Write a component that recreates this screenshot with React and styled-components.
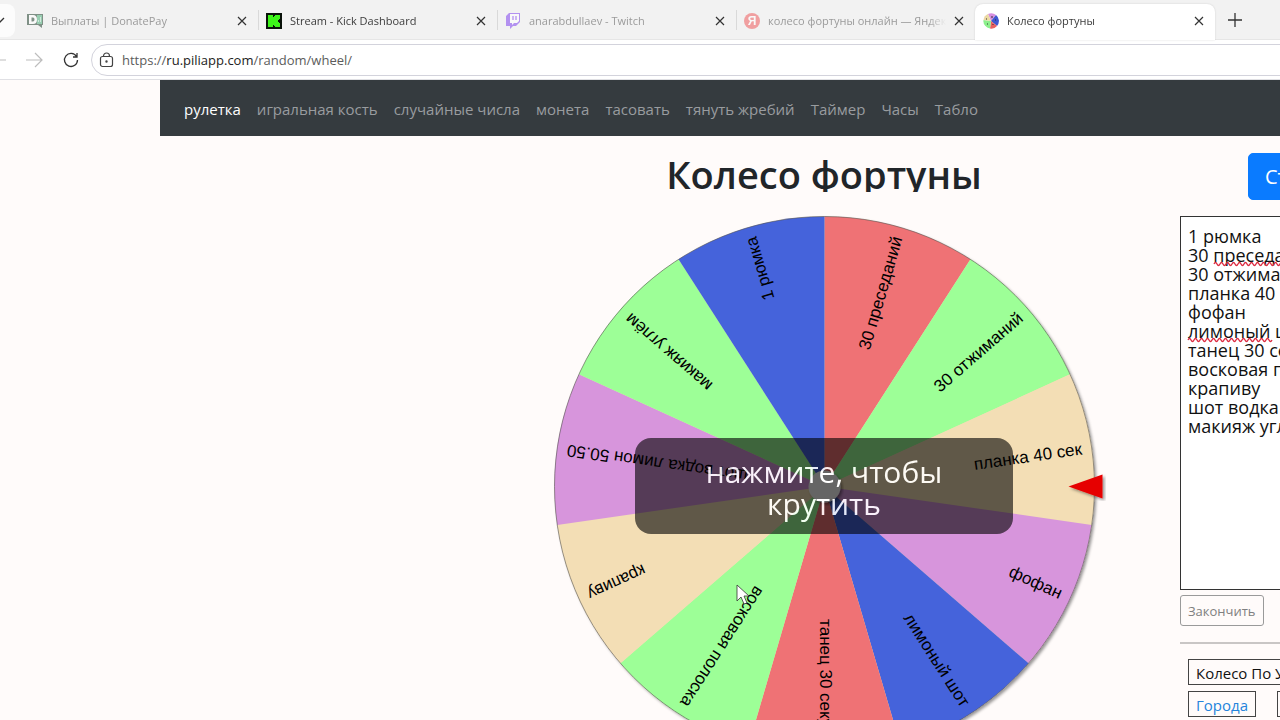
import React, { useState } from "react";
import styled, { createGlobalStyle } from 'styled-components'

const GlobalStyle = createGlobalStyle`
  * { box-sizing: border-box; }
  body {
    margin: 0;
    overflow: hidden;
    background-color: #fffbfa;
    font-family: "Open Sans", "Noto Sans", sans-serif;
    color: #212529;
  }
  button, input, textarea { font-family: inherit; margin: 0; }
`

const Browser = styled.div`
  height: 100vh;
  overflow: hidden;
`

/* tabs */

const TabStrip = styled.div`
  display: flex;
  height: 40px;
  background-color: #f2f2f2;
  border-bottom: 1px solid #e6e6e6;
`

const TabMenu = styled.button`
  flex: none;
  width: 15px;
  height: 33px;
  margin: 4px 4px 0 0;
  padding: 0;
  border: 0;
  border-radius: 0 8px 8px 0;
  background-color: #fcfcfc;
  display: flex;
  align-items: center;
`

const Tab = styled.div`
  flex: none;
  display: flex;
  align-items: center;
  width: ${props => props.$active ? '240px' : '239px'};
  height: 36px;
  margin-top: 4px;
  padding: 0 11px 3px 8px;
  gap: 8px;
  font-size: 11px;
  color: ${props => props.$dim ? '#9b9b9b' : '#3c3c3c'};
  background-color: ${props => props.$active ? '#ffffff' : 'transparent'};
  border-radius: 8px 8px 0 0;
  box-shadow: ${props => props.$active ? '0 0 2px rgba(0, 0, 0, 0.15)' : 'none'};

  > svg {
    flex: none;
    opacity: ${props => props.$dim ? 0.6 : 1};
  }
`

const TabTitle = styled.span`
  flex: 1;
  overflow: hidden;
  white-space: nowrap;
  mask-image: linear-gradient(to right, #000 90%, transparent);
`

const Divider = styled.div`
  flex: none;
  width: 1px;
  height: 20px;
  margin: 10px -1px 0 0;
  background-color: #d9d9d9;
`

const IconButton = styled.button`
  flex: none;
  display: flex;
  align-items: center;
  justify-content: center;
  padding: 0;
  border: 0;
  background: none;
  color: ${props => props.$dim ? '#bdbdbd' : '#333333'};
`

const NewTab = styled(IconButton)`
  width: 40px;
`

/* address row */

const Toolbar = styled.div`
  display: flex;
  align-items: center;
  height: 40px;
  background-color: #ffffff;
  border-bottom: 1px solid #e0e0e4;
  margin-right: -160px;
`

const NavButtons = styled.div`
  display: flex;
  align-items: center;
  gap: 20px;
  margin: 0 12px 0 -10px;
`

const AddressBox = styled.div`
  flex: 1;
  display: flex;
  align-items: center;
  gap: 8px;
  height: 32px;
  padding: 0 7px;
  border: 1px solid #d3d3dc;
  border-radius: 16px;
  color: #444444;
`

const Url = styled.div`
  flex: 1;
  font-size: 13px;
  color: #5c5c5c;

  b {
    font-weight: 400;
    color: #222222;
  }
`

/* page */

const Page = styled.div`
  margin-left: 160px;
  width: 100vw;
`

const Navbar = styled.nav`
  display: flex;
  align-items: center;
  gap: 16px;
  height: 56px;
  padding: 2px 24px 0;
  background-color: #353b3f;
`

const NavLink = styled.a`
  font-size: 15px;
  white-space: nowrap;
  text-decoration: none;
  color: ${props => props.$active ? '#ffffff' : '#999c9f'};
`

const Columns = styled.div`
  display: grid;
  grid-template-columns: 308px 1fr 260px;
`

const Main = styled.main`
  grid-column: 2;
  padding-top: 8px;
  display: flex;
  flex-direction: column;
  align-items: center;
`

const Title = styled.h1`
  margin: 0 0 24px;
  height: 48px;
  line-height: 60px;
  overflow: hidden;
  font-size: 38px;
  font-weight: 600;
`

const WheelBox = styled.div`
  position: relative;
  width: 540px;

  > svg {
    display: block;
    overflow: visible;
  }
`

const SpinButton = styled.button`
  position: absolute;
  top: 222px;
  left: 15%;
  width: 70%;
  height: 96px;
  padding: 4px 48px 0;
  border: 0;
  border-radius: 16px;
  background-color: rgba(0, 0, 0, 0.7);
  opacity: 0.86;
  color: #ffffff;
  font-size: 30px;
  line-height: 32px;
`

const Side = styled.aside`
  padding: 17px 4px 0 0;
`

const StartRow = styled.div`
  padding-left: 68px;
  margin-bottom: 16px;
`

const StartButton = styled.button`
  height: 47px;
  padding: 0 16px;
  border: 1px solid #0a7bff;
  border-radius: 5px;
  background-color: #0a7bff;
  color: #ffffff;
  font-size: 20px;
`

const Editor = styled.div`
  position: relative;
`

const List = styled.textarea`
  display: block;
  width: 100%;
  height: 374px;
  padding: 10px 7px;
  border: 1px solid #333333;
  border-radius: 0;
  outline: none;
  resize: none;
  background-color: #ffffff;
  color: #111111;
  font-size: 18px;
  line-height: 19px;
`

const Squiggles = styled.svg`
  position: absolute;
  top: 0;
  left: 0;
  pointer-events: none;
`

const DoneButton = styled.button`
  display: block;
  height: 31px;
  margin-top: 5px;
  padding: 0 7px;
  border: 1px solid #9a9a9a;
  border-radius: 3px;
  background: none;
  color: #808080;
  font-size: 13px;
`

const Rule = styled.hr`
  margin: 16px 0 15px;
  border: 0;
  border-top: 2px solid #c9c6c5;
`

const Presets = styled.div`
  display: flex;
  flex-wrap: wrap;
  gap: 6px 21px;
  padding-left: 8px;
`

const Preset = styled.a`
  height: 26px;
  padding: 0 7px;
  border: 1px solid #444444;
  font-size: 15px;
  line-height: 26px;
  white-space: nowrap;
  text-decoration: none;
  color: ${props => props.$current ? '#111111' : '#2484dc'};
`

const Pointer = styled.svg`
  position: absolute;
  top: 584px;
  left: 736px;
  pointer-events: none;
`

const NAV = ['рулетка', 'игральная кость', 'случайные числа', 'монета', 'тасовать', 'тянуть жребий', 'Таймер', 'Часы', 'Табло']

const RED = '#ef7275'
const GREEN = '#9dff97'
const TAN = '#f3deb5'
const PURPLE = '#d795dc'
const BLUE = '#4563db'

// clockwise from twelve o'clock
const SLICES = [
  { text: '30 преседаний', color: RED },
  { text: '30 отжиманий', color: GREEN },
  { text: 'планка 40 сек', color: TAN },
  { text: 'фофан', color: PURPLE },
  { text: 'лимоный шот', color: BLUE },
  { text: 'танец 30 секунд', color: RED },
  { text: 'восковая полоска', color: GREEN },
  { text: 'крапиву', color: TAN },
  { text: 'шот водка лимон 50.50', color: PURPLE },
  { text: 'макияж углём', color: GREEN },
  { text: '1 рюмка', color: BLUE },
]

const START_LIST = ['1 рюмка'].concat(SLICES.slice(0, 10).map(s => s.text)).join('\n')

const R = 270
const STEP = 360 / SLICES.length

const point = (deg) => {
  const rad = deg * Math.PI / 180
  return `${R * Math.cos(rad)} ${R * Math.sin(rad)}`
}

const Wheel = ({ turn }) => (
  <svg width="540" height="540" viewBox="-270.5 -270.5 540 540">
    <defs>
      <filter id="shade" x="-10%" y="-10%" width="120%" height="120%">
        <feDropShadow dx="2" dy="2" stdDeviation="1.5" floodColor="#000" floodOpacity="0.4" />
      </filter>
    </defs>
    <g filter="url(#shade)">
      <circle r={R} fill={TAN} />
    </g>
    <g transform={`rotate(${turn})`}>
      {SLICES.map((s, i) => {
        const a = i * STEP - 90
        return <path key={s.text} d={`M0 0L${point(a)}A${R} ${R} 0 0 1 ${point(a + STEP)}Z`} fill={s.color} />
      })}
      <circle r={R} fill="none" stroke="#555" strokeOpacity="0.6" />
      {SLICES.map((s, i) => (
        <text
          key={s.text}
          transform={`rotate(${i * STEP - 90 + STEP / 2})`}
          x="260"
          y="5"
          textAnchor="end"
          fontFamily="Liberation Sans, Arial, sans-serif"
          fontSize="17"
          fill="#000"
        >
          {s.text}
        </text>
      ))}
    </g>
    <circle r="16" fill="#ffffff" filter="url(#shade)" />
    <path d="M244 0L278 -12V12Z" fill="#e60000" filter="url(#shade)" />
  </svg>
)

const Cross = () => (
  <svg width="10" height="10" viewBox="0 0 10 10" stroke="currentColor" strokeWidth="1.2">
    <path d="M1 1l8 8M9 1l-8 8" />
  </svg>
)

const DonateIcon = () => (
  <svg width="16" height="16" viewBox="0 0 16 16">
    <path d="M0 1h16v11h-1v3l-4-3H0z" fill="#33503f" />
    <path d="M10 2h5v9h-5z" fill="#5bb585" />
    <path fillRule="evenodd" d="M2 2h4q4 0 4 4.500t-4 4.500H2zM4.500 4.500v4h1.500q1.500 0 1.500-2t-1.500-2z" fill="#fff" />
    <path d="M11.500 9V7M13.500 9V4" stroke="#fff" strokeWidth=".6" fill="none" />
  </svg>
)

const KickIcon = () => (
  <svg width="16" height="16" viewBox="0 0 16 16">
    <path d="M0 0h16v16H0z" fill="#0a120a" />
    <path d="M2 2h5v2h1V3h1V2h5v4h-1v1h-1v2h1v1h1v4H9v-1H8v-1H7v2H2z" fill="#3df51a" />
  </svg>
)

const TwitchIcon = () => (
  <svg width="16" height="16" viewBox="0 0 16 16">
    <path d="M4 0L1 3v10h4v3l3-3h3l4-4V0z" fill="#8a52ef" />
    <path d="M5 1h9v7l-2 2H9l-2 2v-2H5z" fill="#fff" />
    <path d="M8 3v4M11 3v4" stroke="#8a52ef" strokeWidth="1.3" />
  </svg>
)

const YandexIcon = () => (
  <svg width="16" height="16" viewBox="0 0 16 16">
    <circle cx="8" cy="8" r="8" fill="#f0696a" />
    <text x="8" y="12" textAnchor="middle" fontFamily="Liberation Sans, Arial, sans-serif" fontWeight="700" fontSize="12" fill="#fff">Я</text>
  </svg>
)

const WheelIcon = () => (
  <svg width="16" height="16" viewBox="-8 -8 16 16">
    <path d="M0 0L-3 -7A7.500 7.500 0 0 1 5 -6Z" fill="#d78ee0" />
    <path d="M0 0L5 -6A7.500 7.500 0 0 1 6 5Z" fill="#3f57d0" />
    <path d="M0 0L6 5A7.500 7.500 0 0 1 -1 7.500Z" fill="#e8605f" />
    <path d="M0 0L-1 7.500A7.500 7.500 0 0 1 -7.500 -1Z" fill="#8cf08c" />
    <path d="M0 0L-7.500 -1A7.500 7.500 0 0 1 -3 -7Z" fill="#ecd9a4" />
    <path d="M1 -5v2M4 -1h1M2 3v1M-4 3h1M-5 -2h1" stroke="#333" strokeWidth="1" />
  </svg>
)

const TABS = [
  { title: 'Выплаты | DonatePay', icon: <DonateIcon />, dim: true },
  { title: 'Stream - Kick Dashboard', icon: <KickIcon /> },
  { title: 'anarabdullaev - Twitch', icon: <TwitchIcon />, dim: true },
  { title: 'колесо фортуны онлайн — Яндекс', icon: <YandexIcon />, dim: true },
  { title: 'Колесо фортуны', icon: <WheelIcon />, active: true },
]

const wave = (x, y, width) => {
  let d = `M${x} ${y}`
  for (let i = 0; i < width / 6; i++) d += 'q1.500 -3 3 0t3 0'
  return d
}

function App() {
  const [items, setItems] = useState(START_LIST)
  const [turn, setTurn] = useState(0)

  return (
    <Browser>
      <GlobalStyle />
      <TabStrip>
        <TabMenu aria-label="Список вкладок">
          <svg width="6" height="8" viewBox="0 0 6 8" fill="none" stroke="#333" strokeWidth="1.300">
            <path d="M-3 1l3 4 4-4" />
          </svg>
        </TabMenu>
        {TABS.map((tab, i) => (
          <React.Fragment key={tab.title}>
            {i > 0 && i < 4 && <Divider />}
            <Tab $active={tab.active} $dim={tab.dim}>
              {tab.icon}
              <TabTitle>{tab.title}</TabTitle>
              <IconButton aria-label="Закрыть вкладку"><Cross /></IconButton>
            </Tab>
          </React.Fragment>
        ))}
        <NewTab aria-label="Новая вкладка">
          <svg width="14" height="14" viewBox="0 0 14 14" stroke="currentColor" strokeWidth="1.300">
            <path d="M7 0v14M0 7h14" />
          </svg>
        </NewTab>
      </TabStrip>

      <Toolbar>
        <NavButtons>
          <IconButton $dim aria-label="Назад">
            <svg width="16" height="16" viewBox="0 0 16 16" fill="none" stroke="currentColor" strokeWidth="1.200">
              <path d="M16 8H1M8 1L1 8l7 7" />
            </svg>
          </IconButton>
          <IconButton $dim aria-label="Вперёд">
            <svg width="17" height="16" viewBox="0 0 17 16" fill="none" stroke="currentColor" strokeWidth="1.200">
              <path d="M0 8h16M9 1l7 7-7 7" />
            </svg>
          </IconButton>
          <IconButton aria-label="Обновить">
            <svg width="16" height="16" viewBox="0 0 16 16" fill="none" stroke="currentColor" strokeWidth="1.300">
              <path d="M13.500 4.500A6.500 6.500 0 1 0 14.500 8M14 1v4h-4" />
            </svg>
          </IconButton>
        </NavButtons>
        <AddressBox>
          <svg width="15" height="16" viewBox="0 0 15 16" fill="none" stroke="currentColor" strokeWidth="1.200">
            <rect x="1.500" y="4.500" width="12" height="10" rx="2" />
            <path d="M4.500 4.500V4a3 3 0 0 1 6 0v.5" />
            <circle cx="7.500" cy="9.500" r=".6" fill="currentColor" />
          </svg>
          <Url>https://<b>ru.piliapp.com</b>/random/wheel/</Url>
        </AddressBox>
      </Toolbar>

      <Page>
        <Navbar>
          {NAV.map((name, i) => <NavLink href="#" key={name} $active={i === 0}>{name}</NavLink>)}
        </Navbar>
        <Columns>
          <Main>
            <Title>Колесо фортуны</Title>
            <WheelBox>
              <Wheel turn={turn} />
              <SpinButton onClick={() => setTurn(turn + 90)}>нажмите, чтобы крутить</SpinButton>
            </WheelBox>
          </Main>
          <Side>
            <StartRow>
              <StartButton onClick={() => setTurn(turn + 90)}>Старт</StartButton>
            </StartRow>
            <Editor>
              <List
                aria-label="Список вариантов"
                spellCheck={false}
                value={items}
                onChange={(e) => setItems(e.target.value)}
              />
              <Squiggles width="256" height="374" fill="none" stroke="#dc2a40" strokeWidth="1.3">
                <path d={wave(34, 48, 96)} />
                <path d={wave(8, 124, 80)} />
              </Squiggles>
            </Editor>
            <DoneButton>Закончить</DoneButton>
            <Rule />
            <Presets>
              <Preset href="#" $current>Колесо По Умолчанию</Preset>
              <Preset href="#">Города</Preset>
              <Preset href="#">Страны</Preset>
            </Presets>
          </Side>
        </Columns>
      </Page>

      <Pointer width="14" height="22" viewBox="0 0 14 22">
        <path d="M1 1v16l4-4 3 7 3-1-3-7h5z" fill="#fff" stroke="#333" strokeWidth=".8" />
      </Pointer>
    </Browser>
  )
}

export default App;
